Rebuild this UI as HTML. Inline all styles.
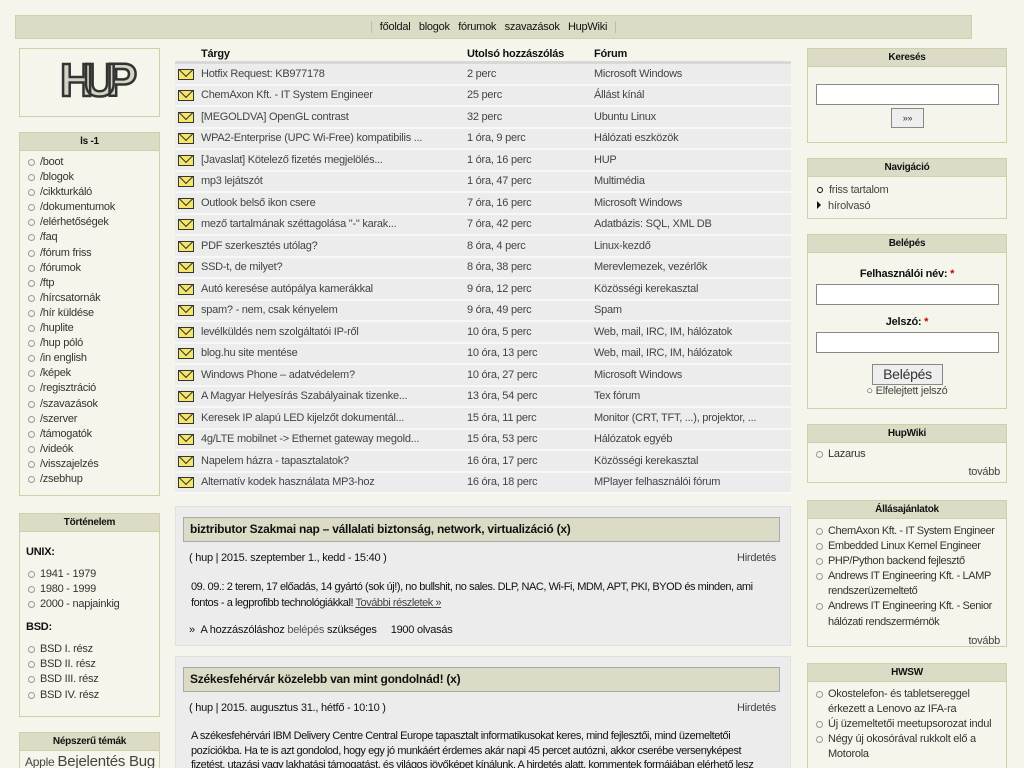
<!DOCTYPE html><html><head><meta charset="utf-8"><style>
html{overflow:hidden;height:768px}
body{margin:0;background:#f5f5eb;font-family:"Liberation Sans",sans-serif;font-size:11px;letter-spacing:-0.25px;color:#333;position:relative;width:1024px;height:768px;overflow:hidden}
.a{position:absolute}
.box{position:absolute;border:1px solid #cfcfa8;background:#f5f5eb;box-sizing:border-box;overflow:hidden}
.hd{background:#dcdcc6;border-bottom:1px solid #cfcfa8;height:17px;line-height:17px;text-align:center;font-weight:bold;font-size:10px;color:#111}
ul{list-style:none;margin:0;padding:0}
li{position:relative;padding-left:20px;line-height:15.1px}
li:before{content:"";position:absolute;left:8px;top:4px;width:5px;height:5px;border:1px solid #999;border-radius:50%}
.nav{left:15px;top:15px;width:957px;height:24px;background:#dcdcc6;border:1px solid #cfcfa8;box-sizing:border-box;text-align:center;line-height:22px;font-size:11px;color:#111}
table{border-collapse:collapse;position:absolute;left:175px;top:46px;width:616px;font-size:11px}
th{text-align:left;font-weight:bold;color:#111;height:15px;border-bottom:3px solid #d8d8d8;padding:0}
td{background:#ececec;border-bottom:2px solid #f7f7f7;height:19.5px;padding:0;color:#444}
.env{display:inline-block;width:16px;height:11px;margin:4px 0 0 3px;background:#f5e66a;border:1px solid #333;box-sizing:border-box;position:relative;overflow:hidden}
.env:after{content:"";position:absolute;left:2px;top:-5px;width:9px;height:9px;border-right:1px solid #333;border-bottom:1px solid #333;transform:rotate(45deg)}
input{box-sizing:border-box;border:1px solid #888;background:#fff}
.art{position:absolute;left:175px;width:616px;background:#ececec;border:1px solid #e0e0e0;box-sizing:border-box}
.tt{margin:10px 10px 0 7px;background:#dcdcc6;border:1px solid #aaa;height:23px;line-height:23px;padding-left:6px;font-weight:bold;font-size:12px;color:#111}
.more{text-align:right;padding-right:6px;color:#444}
</style></head><body>
<div class="a nav"><span style="border-left:1px solid #bbb;border-right:1px solid #bbb;padding:0 8px">főoldal &nbsp; blogok &nbsp; fórumok &nbsp; szavazások &nbsp; HupWiki</span></div>

<div class="box" style="left:19px;top:48px;width:141px;height:69px">
<div class="a" style="left:40px;top:4px;font:bold 46px 'Liberation Sans';color:#d4d4c4;-webkit-text-stroke:2.5px #333;letter-spacing:-10px">HUP</div></div>

<div class="box" style="left:19px;top:132px;width:141px;height:364px"><div class="hd">ls -1</div>
<ul style="padding-top:4px">
<li>/boot</li><li>/blogok</li><li>/cikkturkáló</li><li>/dokumentumok</li><li>/elérhetőségek</li><li>/faq</li><li>/fórum friss</li><li>/fórumok</li><li>/ftp</li><li>/hírcsatornák</li><li>/hír küldése</li><li>/huplite</li><li>/hup póló</li><li>/in english</li><li>/képek</li><li>/regisztráció</li><li>/szavazások</li><li>/szerver</li><li>/támogatók</li><li>/videók</li><li>/visszajelzés</li><li>/zsebhup</li></ul></div>

<div class="box" style="left:19px;top:513px;width:141px;height:204px"><div class="hd">Történelem</div>
<div style="padding:14px 0 0 6px;font-weight:bold;color:#111">UNIX:</div>
<ul style="padding-top:9px"><li>1941 - 1979</li><li>1980 - 1999</li><li>2000 - napjainkig</li></ul>
<div style="padding:9px 0 0 6px;font-weight:bold;color:#111">BSD:</div>
<ul style="padding-top:9px"><li>BSD I. rész</li><li>BSD II. rész</li><li>BSD III. rész</li><li>BSD IV. rész</li></ul></div>

<div class="box" style="left:19px;top:732px;width:141px;height:50px"><div class="hd">Népszerű témák</div>
<div style="padding:2px 5px;font-size:12px;color:#444;white-space:nowrap">Apple <span style="font-size:15px">Bejelentés Bug</span></div></div>

<table>
<tr><th style="width:26px"></th><th style="width:266px">Tárgy</th><th style="width:127px">Utolsó hozzászólás</th><th>Fórum</th></tr>
<tr><td><span class="env"></span></td><td>Hotfix Request: KB977178</td><td>2 perc</td><td>Microsoft Windows</td></tr>
<tr><td><span class="env"></span></td><td>ChemAxon Kft. - IT System Engineer</td><td>25 perc</td><td>Állást kínál</td></tr>
<tr><td><span class="env"></span></td><td>[MEGOLDVA] OpenGL contrast</td><td>32 perc</td><td>Ubuntu Linux</td></tr>
<tr><td><span class="env"></span></td><td>WPA2-Enterprise (UPC Wi-Free) kompatibilis ...</td><td>1 óra, 9 perc</td><td>Hálózati eszközök</td></tr>
<tr><td><span class="env"></span></td><td>[Javaslat] Kötelező fizetés megjelölés...</td><td>1 óra, 16 perc</td><td>HUP</td></tr>
<tr><td><span class="env"></span></td><td>mp3 lejátszót</td><td>1 óra, 47 perc</td><td>Multimédia</td></tr>
<tr><td><span class="env"></span></td><td>Outlook belső ikon csere</td><td>7 óra, 16 perc</td><td>Microsoft Windows</td></tr>
<tr><td><span class="env"></span></td><td>mező tartalmának széttagolása "-" karak...</td><td>7 óra, 42 perc</td><td>Adatbázis: SQL, XML DB</td></tr>
<tr><td><span class="env"></span></td><td>PDF szerkesztés utólag?</td><td>8 óra, 4 perc</td><td>Linux-kezdő</td></tr>
<tr><td><span class="env"></span></td><td>SSD-t, de milyet?</td><td>8 óra, 38 perc</td><td>Merevlemezek, vezérlők</td></tr>
<tr><td><span class="env"></span></td><td>Autó keresése autópálya kamerákkal</td><td>9 óra, 12 perc</td><td>Közösségi kerekasztal</td></tr>
<tr><td><span class="env"></span></td><td>spam? - nem, csak kényelem</td><td>9 óra, 49 perc</td><td>Spam</td></tr>
<tr><td><span class="env"></span></td><td>levélküldés nem szolgáltatói IP-ről</td><td>10 óra, 5 perc</td><td>Web, mail, IRC, IM, hálózatok</td></tr>
<tr><td><span class="env"></span></td><td>blog.hu site mentése</td><td>10 óra, 13 perc</td><td>Web, mail, IRC, IM, hálózatok</td></tr>
<tr><td><span class="env"></span></td><td>Windows Phone – adatvédelem?</td><td>10 óra, 27 perc</td><td>Microsoft Windows</td></tr>
<tr><td><span class="env"></span></td><td>A Magyar Helyesírás Szabályainak tizenke...</td><td>13 óra, 54 perc</td><td>Tex fórum</td></tr>
<tr><td><span class="env"></span></td><td>Keresek IP alapú LED kijelzőt dokumentál...</td><td>15 óra, 11 perc</td><td>Monitor (CRT, TFT, ...), projektor, ...</td></tr>
<tr><td><span class="env"></span></td><td>4g/LTE mobilnet -&gt; Ethernet gateway megold...</td><td>15 óra, 53 perc</td><td>Hálózatok egyéb</td></tr>
<tr><td><span class="env"></span></td><td>Napelem házra - tapasztalatok?</td><td>16 óra, 17 perc</td><td>Közösségi kerekasztal</td></tr>
<tr><td><span class="env"></span></td><td>Alternatív kodek használata MP3-hoz</td><td>16 óra, 18 perc</td><td>MPlayer felhasználói fórum</td></tr>
</table>

<div class="art" style="top:506px;height:140px">
<div class="tt">biztributor Szakmai nap – vállalati biztonság, network, virtualizáció (x)</div>
<div style="margin:10px 14px 0 13px;color:#111"><span style="float:right;color:#444">Hirdetés</span>( hup | 2015. szeptember 1., kedd - 15:40 )</div>
<div style="margin:15px 14px 0 15px;line-height:16px;color:#111;letter-spacing:-0.45px">09. 09.: 2 terem, 17 előadás, 14 gyártó (sok új!), no bullshit, no sales. DLP, NAC, Wi-Fi, MDM, APT, PKI, BYOD és minden, ami fontos - a legprofibb technológiákkal! <u style="color:#444">További részletek »</u></div>
<div style="margin:13px 0 0 13px;color:#111">» &nbsp;A hozzászóláshoz <span style="color:#555">belépés</span> szükséges &nbsp; &nbsp; 1900 olvasás</div></div>

<div class="art" style="top:656px;height:130px">
<div class="tt">Székesfehérvár közelebb van mint gondolnád! (x)</div>
<div style="margin:10px 14px 0 13px;color:#111"><span style="float:right;color:#444">Hirdetés</span>( hup | 2015. augusztus 31., hétfő - 10:10 )</div>
<div style="margin:15px 14px 0 15px;line-height:14.5px;color:#111;letter-spacing:-0.45px">A székesfehérvári IBM Delivery Centre Central Europe tapasztalt informatikusokat keres, mind fejlesztői, mind üzemeltetői pozíciókba. Ha te is azt gondolod, hogy egy jó munkáért érdemes akár napi 45 percet autózni, akkor cserébe versenyképest fizetést, utazási vagy lakhatási támogatást, és világos jövőképet kínálunk. A hirdetés alatt, kommentek formájában elérhető lesz</div></div>

<div class="box" style="left:807px;top:48px;width:200px;height:95px"><div class="hd">Keresés</div>
<input style="position:absolute;left:8px;top:35px;width:183px;height:21px">
<div class="a" style="left:83px;top:59px;width:33px;height:20px;border:1px solid #888;background:#eee;box-sizing:border-box;text-align:center;line-height:18px;font-size:9px">»»</div></div>

<div class="box" style="left:807px;top:158px;width:200px;height:61px"><div class="hd">Navigáció</div>
<div style="padding:6px 0 0 9px;line-height:15.5px;color:#444">
<div><span style="display:inline-block;width:4px;height:4px;border:1px solid #111;border-radius:50%;margin-right:6px"></span>friss tartalom</div>
<div><span style="display:inline-block;width:0;height:0;border-left:4px solid #111;border-top:4px solid transparent;border-bottom:4px solid transparent;margin-right:7px"></span>hírolvasó</div></div></div>

<div class="box" style="left:807px;top:234px;width:200px;height:175px"><div class="hd">Belépés</div>
<div class="a" style="top:33px;width:100%;text-align:center;font-weight:bold;color:#111">Felhasználói név: <span style="color:#c00">*</span></div>
<input style="position:absolute;left:8px;top:49px;width:183px;height:21px">
<div class="a" style="top:81px;width:100%;text-align:center;font-weight:bold;color:#111">Jelszó: <span style="color:#c00">*</span></div>
<input style="position:absolute;left:8px;top:97px;width:183px;height:21px">
<div class="a" style="left:64px;top:129px;width:71px;height:21px;border:1px solid #888;background:#eee;box-sizing:border-box;text-align:center;line-height:19px;font-size:14px">Belépés</div>
<div class="a" style="top:150px;width:100%;text-align:center;color:#444">○ Elfelejtett jelszó</div></div>

<div class="box" style="left:807px;top:424px;width:200px;height:59px"><div class="hd">HupWiki</div>
<ul style="padding-top:4px;color:#333"><li>Lazarus</li></ul><div class="more" style="margin-top:4px">tovább</div></div>

<div class="box" style="left:807px;top:500px;width:200px;height:147px"><div class="hd">Állásajánlatok</div>
<ul style="padding-top:5px;color:#333;letter-spacing:-0.4px"><li>ChemAxon Kft. - IT System Engineer</li><li>Embedded Linux Kernel Engineer</li><li>PHP/Python backend fejlesztő</li><li>Andrews IT Engineering Kft. - LAMP rendszerüzemeltető</li><li>Andrews IT Engineering Kft. - Senior hálózati rendszermérnök</li></ul><div class="more" style="margin-top:5px">tovább</div></div>

<div class="box" style="left:807px;top:663px;width:200px;height:120px"><div class="hd">HWSW</div>
<ul style="padding-top:5px;color:#333"><li>Okostelefon- és tabletsereggel érkezett a Lenovo az IFA-ra</li><li>Új üzemeltetői meetupsorozat indul</li><li>Négy új okosórával rukkolt elő a Motorola</li></ul><div class="more" style="margin-top:6px">tovább</div></div>
</body></html>
